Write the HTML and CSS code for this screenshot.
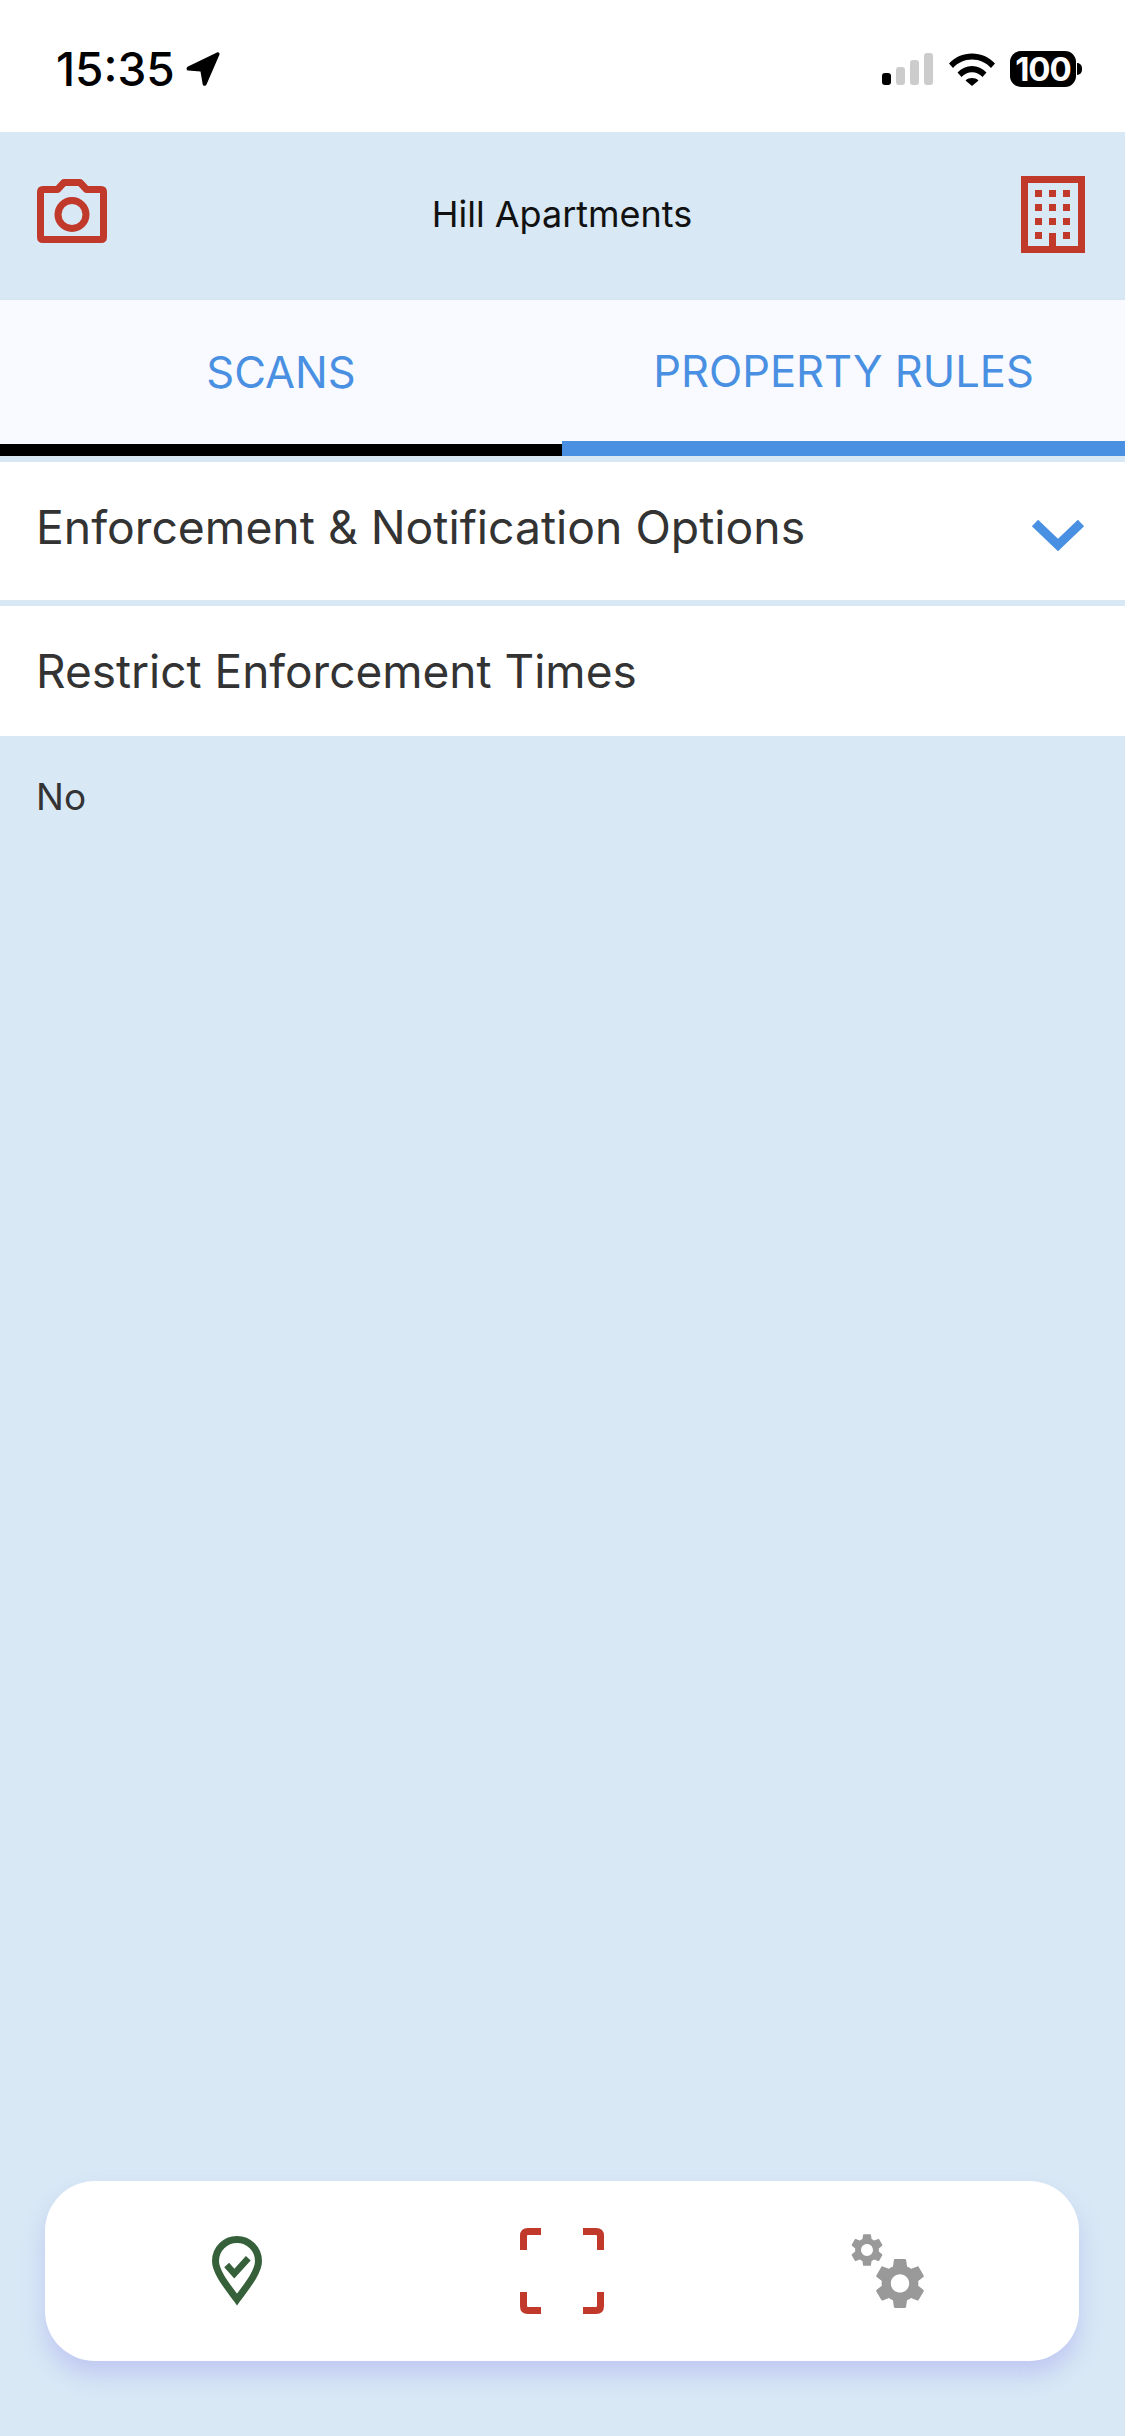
FILE: index.html
```html
<!DOCTYPE html>
<html lang="en">
<head>
    <meta charset="UTF-8">
    <meta name="viewport" content="width=device-width, initial-scale=1.0">
    <title>Property Rules</title>
    <link rel="stylesheet" href="styles.css">
</head>
<body>

<div class="page">

    <!-- Status bar -->
    <div class="status-bar">
        <div class="status-left">
            <span class="clock">15:35</span>
            <svg class="arrow-icon" width="36" height="36" viewBox="0 0 36 36">
                <path d="M3 15.500 32 1.500c1.600-.7 3 .6 2.400 2.200L21.500 33.500c-.8 1.800-3.400 1.700-3.800-.3L15.500 20.500 3.200 19.600c-2-.2-2.200-3-.2-4.100z" fill="#000"/>
            </svg>
        </div>
        <div class="status-right">
            <svg width="52" height="33" viewBox="0 0 52 33">
                <rect x="0" y="20" width="9" height="12" rx="3" fill="#000"/>
                <rect x="14" y="14" width="9" height="18" rx="3" fill="#ccc"/>
                <rect x="28" y="7" width="9" height="25" rx="3" fill="#ccc"/>
                <rect x="42" y="0" width="9" height="32" rx="3" fill="#ccc"/>
            </svg>
            <svg width="46" height="33" viewBox="0 0 46 33">
                <path d="M0 10.500C6 4 14 .5 23 .5S40 4 46 10.500l-4 4.500C37 9.500 30.500 6.500 23 6.500S9 9.500 4 15z" fill="#000"/>
                <path d="M8.500 19.500C12.500 15.300 17.500 13 23 13s10.500 2.300 14.500 6.500l-4 4.500C30.500 21 27 19.300 23 19.300S15.500 21 12.500 24z" fill="#000"/>
                <path d="M16.500 27.500C18.300 25.700 20.500 25 23 25s4.700.7 6.500 2.500L23 33z" fill="#000"/>
            </svg>
            <div class="battery">
                <span class="battery-level">100</span>
                <span class="battery-tip"></span>
            </div>
        </div>
    </div>

    <!-- Header -->
    <div class="header">
        <svg class="camera-icon" width="70" height="64" viewBox="0 0 70 64">
            <path d="M6 10.500H20.500L27 3.500H43L49.500 10.500H64Q66.500 10.500 66.500 13V58Q66.500 60.500 64 60.500H6Q3.500 60.500 3.500 58V13Q3.500 10.500 6 10.500Z" fill="none" stroke="#c0392b" stroke-width="7" stroke-linejoin="round"/>
            <circle cx="35" cy="35.500" r="14" fill="none" stroke="#c0392b" stroke-width="7"/>
        </svg>
        <span class="header-title">Hill Apartments</span>
        <svg class="building-icon" width="64" height="77" viewBox="0 0 64 77">
            <path d="M3.500 3.500H60.500V73.500H3.500Z" fill="none" stroke="#c0392b" stroke-width="7"/>
            <g fill="#c0392b">
                <rect x="14" y="14" width="7" height="7"/><rect x="28" y="14" width="7" height="7"/><rect x="42" y="14" width="7" height="7"/>
                <rect x="14" y="28" width="7" height="7"/><rect x="28" y="28" width="7" height="7"/><rect x="42" y="28" width="7" height="7"/>
                <rect x="14" y="42" width="7" height="7"/><rect x="28" y="42" width="7" height="7"/><rect x="42" y="42" width="7" height="7"/>
                <rect x="14" y="56" width="7" height="7"/><rect x="28" y="57" width="7" height="18"/><rect x="42" y="56" width="7" height="7"/>
            </g>
        </svg>
    </div>

    <!-- Tabs -->
    <div class="tabs">
        <div class="tab tab-scans">SCANS</div>
        <div class="tab tab-active">PROPERTY RULES</div>
    </div>

    <!-- Rules -->
    <div class="row row-first">
        <span class="row-label">Enforcement &amp; Notification Options</span>
        <svg class="row-chevron" width="54" height="33" viewBox="0 0 54 33">
            <path d="M4 4 27 26 50 4" fill="none" stroke="#4a90e2" stroke-width="9"/>
        </svg>
    </div>
    <div class="row row-second">
        <span>Restrict Enforcement Times</span>
    </div>
    <p class="value">No</p>

    <!-- Bottom nav -->
    <div class="bottom-nav">
        <div class="nav-item">
            <svg width="50" height="70" viewBox="0 0 50 70">
                <path d="M25 63.500C15 50 3.500 36 3.500 25A21.500 21.500 0 0 1 46.500 25C46.500 36 35 50 25 63.500Z" fill="none" stroke="#35603a" stroke-width="7"/>
                <path d="M14.700 29 22.300 37.700 36.300 22.300" fill="none" stroke="#35603a" stroke-width="6.500"/>
            </svg>
        </div>
        <div class="nav-item">
            <svg width="84" height="86" viewBox="0 0 84 86">
                <path d="M21 3.500H8Q3.500 3.500 3.500 8V22M63 3.500H76Q80.500 3.500 80.500 8V22M3.500 64V78Q3.500 82.500 8 82.500H21M80.500 64V78Q80.500 82.500 76 82.500H63" fill="none" stroke="#c0392b" stroke-width="7"/>
            </svg>
        </div>
        <div class="nav-item">
            <svg width="73" height="74" viewBox="0 0 73 74">
                <defs>
                    <path id="gear" fill-rule="evenodd" d="M19.140 12.940c.04-.3.06-.61.06-.94 0-.32-.02-.64-.07-.94l2.030-1.580a.49.49 0 0 0 .12-.61l-1.920-3.320a.488.488 0 0 0-.59-.22l-2.390.96c-.5-.38-1.030-.7-1.620-.94l-.36-2.540a.484.484 0 0 0-.48-.41h-3.840c-.24 0-.43.17-.47.41l-.36 2.540c-.59.24-1.130.57-1.620.94l-2.390-.96c-.22-.08-.47 0-.59.22L2.740 8.870c-.12.21-.08.47.12.61l2.030 1.580c-.05.3-.09.63-.09.94s.02.64.07.94l-2.030 1.580a.49.49 0 0 0-.12.61l1.920 3.320c.12.22.37.29.59.22l2.390-.96c.5.38 1.030.7 1.620.94l.36 2.540c.05.24.24.41.48.41h3.840c.24 0 .44-.17.47-.41l.36-2.540c.59-.24 1.130-.56 1.620-.94l2.390.96c.22.08.47 0 .59-.22l1.920-3.320c.12-.22.07-.47-.12-.61l-2.010-1.580zM12 15.600c-1.980 0-3.600-1.620-3.600-3.600s1.620-3.600 3.600-3.600 3.600 1.620 3.600 3.600-1.620 3.600-3.600 3.600z"/>
                </defs>
                <use href="#gear" fill="#999" transform="translate(18.400 18.800) scale(2.550)"/>
                <use href="#gear" fill="#999" transform="translate(-3.800 -3.800) scale(1.650)"/>
            </svg>
        </div>
    </div>

</div>

</body>
</html>
```

FILE: styles.css
```css
body {
    margin: 0;
    font-family: Inter, "Liberation Sans", sans-serif;
    background-color: #d8e8f5;
    color: #333;
}

.page {
    display: flex;
    flex-direction: column;
    width: 1125px;
    height: 2436px;
    overflow: hidden;
}

.status-bar {
    display: flex;
    justify-content: space-between;
    align-items: flex-start;
    height: 132px;
    box-sizing: border-box;
    padding: 51px 43px 0 56px;
    background-color: #fff;
    color: #000;
}

.status-left {
    display: flex;
    align-items: center;
    gap: 10px;
}

.clock {
    font-size: 46px;
    font-weight: 500;
    line-height: 36px;
}

.status-right {
    display: flex;
    align-items: center;
    gap: 15px;
}

.battery {
    display: flex;
    align-items: center;
    gap: 1px;
}

.battery-level {
    width: 66px;
    height: 36px;
    border-radius: 11px;
    background-color: #000;
    color: #fff;
    font-size: 33px;
    font-weight: 700;
    letter-spacing: -1px;
    line-height: 36px;
    text-align: center;
}

.battery-tip {
    width: 5px;
    height: 12px;
    border-radius: 0 6px 6px 0;
    background-color: #000;
}

.header {
    display: flex;
    justify-content: space-between;
    align-items: center;
    height: 168px;
    box-sizing: border-box;
    padding: 0 40px 6px 37px;
}

.camera-icon {
    margin-bottom: 4px;
}

.building-icon {
    margin-top: 3px;
}

.header-title {
    margin: 2px 4px 0 0;
    font-size: 36px;
    color: #111;
}

.tabs {
    display: flex;
    height: 156px;
    background-color: #f8faff;
    box-shadow: 0 -1px 2px rgba(0, 0, 0, 0.02);
}

.tab {
    display: flex;
    justify-content: center;
    align-items: center;
    box-sizing: border-box;
    border-bottom: 12px solid #000;
    color: #4a90e2;
    font-size: 43.5px;
}

.tab-scans {
    width: 562px;
}

.tab-active {
    flex: 1;
    border-bottom: 15px solid #4a90e2;
}

.row {
    display: flex;
    justify-content: space-between;
    align-items: center;
    margin-top: 6px;
    padding: 0 40px 0 36px;
    background-color: #fff;
    font-size: 46px;
}

.row-first {
    height: 138px;
    font-size: 46.3px;
}

.row-label {
    margin-bottom: 8px;
}

.row-chevron {
    margin-top: 8px;
}

.row-second {
    height: 130px;
}

.value {
    margin: 0;
    padding: 40px 36px;
    font-size: 37px;
    line-height: 42px;
}

.bottom-nav {
    display: grid;
    grid-template-columns: repeat(3, 325px);
    justify-content: center;
    align-items: center;
    height: 180px;
    margin: auto 46px 75px 45px;
    border-radius: 50px;
    background-color: #fff;
    box-shadow: 0 14px 22px rgba(165, 165, 240, 0.45);
}

.nav-item {
    display: flex;
    justify-content: center;
}
```
